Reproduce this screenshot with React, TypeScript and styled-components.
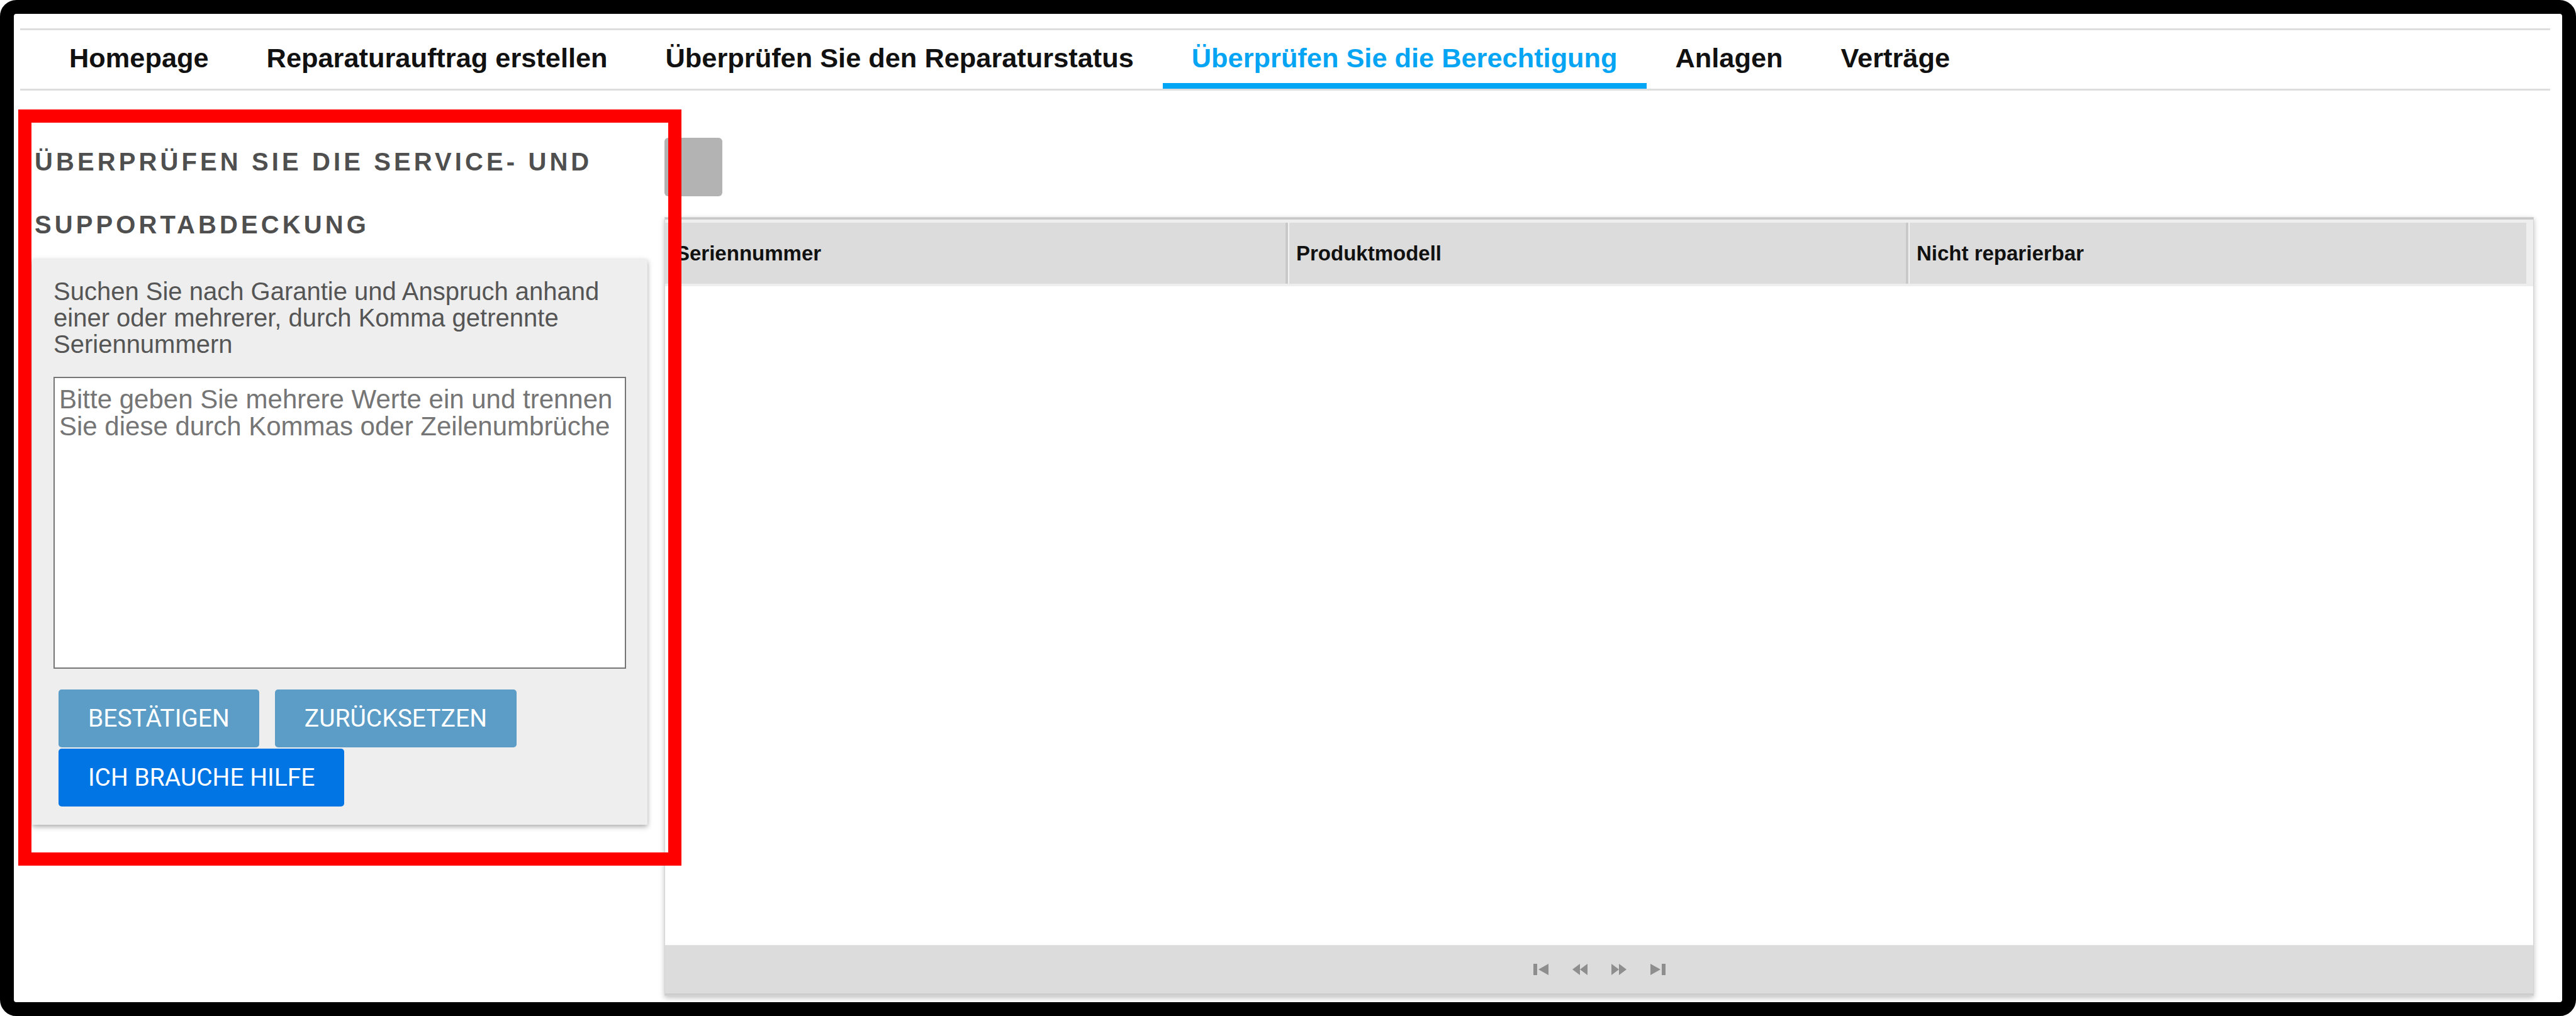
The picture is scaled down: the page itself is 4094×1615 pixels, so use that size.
import styled, { createGlobalStyle } from "styled-components";

const GlobalStyle = createGlobalStyle`
  html, body {
    margin: 0;
    padding: 0;
    background: #ffffff;
  }
  * {
    box-sizing: border-box;
  }
`;

const Frame = styled.div`
  position: relative;
  display: flex;
  flex-direction: column;
  width: 100vw;
  height: 100vh;
  border: 22px solid #000;
  border-radius: 26px;
  background: #fff;
  font-family: "Liberation Sans", Arial, sans-serif;
  overflow: hidden;
`;

const NavWrap = styled.div`
  margin: 23px 19px 0 10px;
`;

const Nav = styled.nav`
  display: flex;
  padding-left: 32px;
  border-top: 3px solid #dedede;
  border-bottom: 3px solid #dedede;
`;

const Tab = styled.a<{ $active?: boolean }>`
  display: flex;
  align-items: center;
  height: 93px;
  padding: 0 46px;
  padding-top: 5px;
  font-size: 43.35px;
  font-weight: bold;
  color: ${(p) => (p.$active ? "#06a5f4" : "#111")};
  border-bottom: 9px solid ${(p) => (p.$active ? "#03a6f5" : "transparent")};
  text-decoration: none;
  white-space: nowrap;
  cursor: pointer;
`;

const Main = styled.div`
  flex: 1;
  display: flex;
  gap: 27px;
  padding: 0 45px 10px 29px;
  min-height: 0;
`;

const LeftCol = styled.div`
  width: 978px;
  flex-shrink: 0;
  padding-top: 63px;
`;

const Heading = styled.h3`
  margin: 0 0 5px 4px;
  font-size: 40px;
  line-height: 100px;
  font-weight: bold;
  letter-spacing: 5.1px;
  text-transform: uppercase;
  color: #4f4f4f;
`;

const Panel = styled.div`
  background: #eeeeee;
  padding: 30px 34px 29px 34px;
  box-shadow: 0 3px 8px rgba(0, 0, 0, 0.35);
`;

const Description = styled.p`
  margin: 0 0 31px 0;
  font-size: 40px;
  line-height: 42px;
  color: #555;
`;

const SerialInput = styled.textarea`
  display: block;
  width: 100%;
  height: 464px;
  margin: 0 0 33px 0;
  padding: 12px 7px;
  border: 2px solid #767676;
  background: #fff;
  font-family: "Liberation Sans", Arial, sans-serif;
  font-size: 42px;
  line-height: 43px;
  color: #333;
  resize: none;

  &::placeholder {
    color: #757575;
  }
`;

const ButtonRow = styled.div`
  display: flex;
  flex-wrap: wrap;
  column-gap: 25px;
  row-gap: 2px;
  padding-left: 8px;
`;

const ActionButton = styled.button<{ $primary?: boolean }>`
  height: 92px;
  padding: 0 47px;
  border: none;
  border-radius: 5px;
  background: ${(p) => (p.$primary ? "#0275e5" : "#5b9dc7")};
  color: #fff;
  font-family: Roboto, "Liberation Sans", sans-serif;
  font-size: 39px;
  text-transform: uppercase;
  cursor: pointer;
`;

const RightCol = styled.div`
  flex: 1;
  display: flex;
  flex-direction: column;
  gap: 33px;
  padding-top: 75px;
  min-width: 0;
`;

const GrayButton = styled.button`
  align-self: flex-start;
  width: 92px;
  height: 93px;
  border: none;
  border-radius: 6px;
  background: #b3b3b3;
`;

const Grid = styled.div`
  flex: 1;
  display: flex;
  flex-direction: column;
  background: #fff;
  border: 1px solid #d4d4d4;
  box-shadow: 0 3px 8px rgba(0, 0, 0, 0.25);
`;

const HeaderWrap = styled.div`
  padding: 5px 11px 4px 0;
  background: #eeeeee;
  border-top: 3px solid #c8c8c8;
`;

const HeaderRow = styled.div`
  display: grid;
  grid-template-columns: repeat(3, 1fr);
  height: 97px;
  background: #dcdcdc;
`;

const HeaderCell = styled.div<{ $first?: boolean }>`
  display: flex;
  align-items: center;
  padding-left: ${(p) => (p.$first ? "17px" : "13px")};
  font-size: 33px;
  font-weight: bold;
  color: #111;
  border-left: ${(p) => (p.$first ? "none" : "4px solid #c9c9c9")};
  box-shadow: ${(p) => (p.$first ? "none" : "inset 2px 0 0 #f2f2f2")};
`;

const GridBody = styled.div`
  flex: 1;
`;

const Pager = styled.div`
  display: flex;
  align-items: center;
  justify-content: center;
  gap: 38px;
  height: 80px;
  background: #dcdcdc;
  border-top: 1px solid #e6e6e6;
  border-bottom: 3px solid #cdcdcd;
`;

const PagerIcon = styled.svg`
  width: 24px;
  height: 22px;
  fill: #8e8e8e;
`;

const Annotation = styled.div`
  position: absolute;
  left: 7px;
  top: 152px;
  width: 1054px;
  height: 1202px;
  border: 21px solid #ff0000;
  pointer-events: none;
`;

const tabs = [
  "Homepage",
  "Reparaturauftrag erstellen",
  "Überprüfen Sie den Reparaturstatus",
  "Überprüfen Sie die Berechtigung",
  "Anlagen",
  "Verträge",
];

const columns = ["Seriennummer", "Produktmodell", "Nicht reparierbar"];

const App = () => {
  return (
    <>
      <GlobalStyle />
      <Frame>
        <NavWrap>
          <Nav>
            {tabs.map((t) => (
              <Tab key={t} $active={t === "Überprüfen Sie die Berechtigung"}>
                {t}
              </Tab>
            ))}
          </Nav>
        </NavWrap>
        <Main>
          <LeftCol>
            <Heading>Überprüfen Sie die Service- und Supportabdeckung</Heading>
            <Panel>
              <Description>
                Suchen Sie nach Garantie und Anspruch anhand einer oder mehrerer,
                durch Komma getrennte Seriennummern
              </Description>
              <SerialInput placeholder="Bitte geben Sie mehrere Werte ein und trennen Sie diese durch Kommas oder Zeilenumbrüche" />
              <ButtonRow>
                <ActionButton>Bestätigen</ActionButton>
                <ActionButton>Zurücksetzen</ActionButton>
                <ActionButton $primary>Ich brauche Hilfe</ActionButton>
              </ButtonRow>
            </Panel>
          </LeftCol>
          <RightCol>
            <GrayButton />
            <Grid>
              <HeaderWrap>
                <HeaderRow>
                  {columns.map((c, i) => (
                    <HeaderCell key={c} $first={i === 0}>
                      {c}
                    </HeaderCell>
                  ))}
                </HeaderRow>
              </HeaderWrap>
              <GridBody />
              <Pager>
                <PagerIcon viewBox="0 0 24 22">
                  <rect x="0" y="2" width="6" height="18" />
                  <polygon points="24,2 24,20 8,11" />
                </PagerIcon>
                <PagerIcon viewBox="0 0 24 22">
                  <polygon points="12,2 12,20 0,11" />
                  <polygon points="24,2 24,20 12,11" />
                </PagerIcon>
                <PagerIcon viewBox="0 0 24 22">
                  <polygon points="0,2 0,20 12,11" />
                  <polygon points="12,2 12,20 24,11" />
                </PagerIcon>
                <PagerIcon viewBox="0 0 24 22">
                  <polygon points="0,2 0,20 16,11" />
                  <rect x="18" y="2" width="6" height="18" />
                </PagerIcon>
              </Pager>
            </Grid>
          </RightCol>
        </Main>
        <Annotation />
      </Frame>
    </>
  );
};

export default App;
